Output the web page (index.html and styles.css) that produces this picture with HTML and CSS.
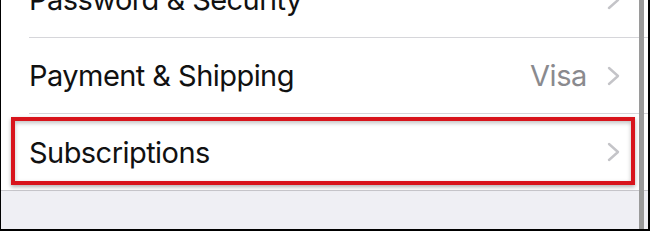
FILE: index.html
```html
<!DOCTYPE html>
<html lang="en">
<head>
  <meta charset="UTF-8">
  <title>Apple ID</title>
  <link rel="stylesheet" href="styles.css">
</head>
<body>
  <div class="screen">
    <div class="list">
      <div class="row">
        <span class="label">Password &amp; Security</span>
        <span class="detail"></span>
        <svg class="chevron" viewBox="0 0 13 20"><polyline points="2,2 11,10 2,18"/></svg>
      </div>
      <div class="row">
        <span class="label">Payment &amp; Shipping</span>
        <span class="detail">Visa</span>
        <svg class="chevron" viewBox="0 0 13 20"><polyline points="2,2 11,10 2,18"/></svg>
      </div>
      <div class="row last">
        <span class="label">Subscriptions</span>
        <span class="detail"></span>
        <svg class="chevron" viewBox="0 0 13 20"><polyline points="2,2 11,10 2,18"/></svg>
      </div>
    </div>
    <div class="grouped-bg"></div>

    <!-- annotation + scroll indicator sit on top of the list -->
    <div class="highlight"></div>
    <div class="scrollbar"></div>
  </div>
</body>
</html>
```

FILE: styles.css
```css
body {
  margin: 0;
  padding: 0;
  background: #000;
  font-family: 'Inter', 'Noto Sans', sans-serif;
}

.screen {
  position: relative;
  width: 647px;
  height: 229px;
  border-left: 1px solid #000;
  border-right: 2px solid #000;
  border-bottom: 2px solid #000;
  background: #efeff4;
  overflow: hidden;
  display: flex;
  flex-direction: column;
}

.list {
  margin-top: -38px;
  background: #fff;
  border-bottom: 1px solid #c8c7cc;
}

.row {
  height: 76px;
  display: flex;
  align-items: center;
  margin-left: 28px;
  padding-right: 28px;
  border-bottom: 1px solid #d6d6da;
  box-sizing: border-box;
}

.row.last {
  border-bottom: none;
}

.label {
  flex: 1;
  font-size: 29px;
  color: #111;
  letter-spacing: -0.55px;
}

.detail {
  font-size: 29px;
  color: #8a8a8e;
  letter-spacing: -0.4px;
  margin-right: 20px;
}

.chevron {
  width: 13px;
  height: 20px;
  fill: none;
  stroke: #c4c4c8;
  stroke-width: 2.4;
  stroke-linecap: round;
  stroke-linejoin: round;
}

.grouped-bg {
  flex: 1;
  background: #efeff4;
}

.highlight {
  position: absolute;
  left: 10px;
  top: 117px;
  width: 616px;
  height: 60px;
  border: 4px solid #d8141c;
  box-shadow: 0 2px 4px rgba(0, 0, 0, 0.3), inset 0 2px 4px rgba(0, 0, 0, 0.25);
}

.scrollbar {
  position: absolute;
  left: 638px;
  top: 0;
  bottom: 0;
  width: 5px;
  background: #9a9a9a;
}
```
